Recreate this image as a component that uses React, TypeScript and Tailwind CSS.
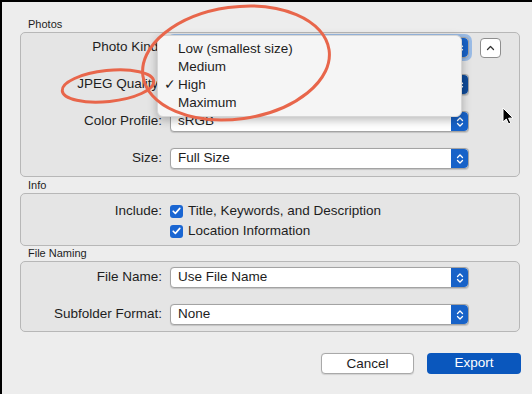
import React from "react";

function Stepper({ dark }: { dark?: boolean }) {
  return (
    <div
      className={`w-[17px] h-full flex items-center justify-center rounded-r-[4px] ${
        dark ? "bg-[#0e4a98]" : "bg-[#1762c8]"
      }`}
    >
      <svg width="8" height="12" viewBox="0 0 8 12" fill="none">
        <path d="M1.5 4.5 L4 2 L6.5 4.5" stroke="white" strokeWidth="1.3" strokeLinecap="round" strokeLinejoin="round" />
        <path d="M1.5 7.5 L4 10 L6.5 7.5" stroke="white" strokeWidth="1.3" strokeLinecap="round" strokeLinejoin="round" />
      </svg>
    </div>
  );
}

// value is optional: the two popups under the open menu show no text
function Popup({ value, focus, dark }: { value?: string; focus?: boolean; dark?: boolean }) {
  return (
    <div
      className={`w-[299px] h-[21px] flex items-stretch bg-white border border-[#a3a3a3] rounded-[4px] shadow-[0_0.5px_1px_rgba(0,0,0,0.15)] ${
        focus ? "ring-[3px] ring-[#7aa9e6]/70" : ""
      }`}
    >
      <div className="flex-1 pl-[7px] flex items-center text-[13.5px] text-[#1d1d1d]">{value}</div>
      <Stepper dark={dark} />
    </div>
  );
}

function Row({ label, children }: { label: string; children: React.ReactNode }) {
  return (
    <div className="flex items-center h-[21px]">
      <div className="w-[141px] text-right text-[13.5px] text-[#1d1d1d] whitespace-nowrap">{label}</div>
      <div className="ml-[8px] flex items-center">{children}</div>
    </div>
  );
}

function Check({ label }: { label: string }) {
  return (
    <div className="flex items-center h-[18px]">
      <div className="w-[13px] h-[13px] rounded-[3px] bg-[#1a66d2] flex items-center justify-center">
        <svg width="9" height="8" viewBox="0 0 9 8" fill="none">
          <path d="M1.2 4.2 L3.4 6.4 L7.8 1.4" stroke="white" strokeWidth="1.6" strokeLinecap="round" strokeLinejoin="round" />
        </svg>
      </div>
      <span className="ml-[5px] text-[13.5px] text-[#1d1d1d]">{label}</span>
    </div>
  );
}

function SectionLabel({ text, className = "" }: { text: string; className?: string }) {
  return <div className={`h-[15px] leading-[15px] pl-[8px] text-[11px] text-[#1d1d1d] ${className}`}>{text}</div>;
}

export default function App() {
  const items = ["Low (smallest size)", "Medium", "High", "Maximum"];

  return (
    <div className="relative w-[532px] h-[394px] overflow-hidden bg-[#ededed] border-t-2 border-l-2 border-black font-['Liberation_Sans',Arial,sans-serif]">
      <div className="pl-[18px] pt-[15px] w-[518px]">
        <SectionLabel text="Photos" />
        <div className="w-[500px] border border-[#b7b7b7] rounded-[5px] bg-[#e5e5e5] pt-[4px] pb-[7px] flex flex-col gap-[16px]">
          <Row label="Photo Kind:">
            <Popup focus />
            <div className="ml-[11px] w-[21px] h-[20px] bg-white border border-[#8e8e8e] rounded-[4px] flex items-center justify-center">
              <svg width="9" height="6" viewBox="0 0 9 6" fill="none">
                <path d="M1.5 4.5 L4.5 1.5 L7.5 4.5" stroke="#333" strokeWidth="1.3" strokeLinecap="round" strokeLinejoin="round" />
              </svg>
            </div>
          </Row>
          <Row label="JPEG Quality:">
            <Popup dark />
          </Row>
          <Row label="Color Profile:">
            <Popup value="sRGB" />
          </Row>
          <Row label="Size:">
            <Popup value="Full Size" />
          </Row>
        </div>

        <SectionLabel text="Info" className="mt-[1px]" />
        <div className="w-[500px] h-[53px] border border-[#b7b7b7] rounded-[5px] bg-[#e5e5e5] pt-[7px] flex flex-col gap-[1px]">
          <div className="flex items-center">
            <div className="w-[141px] text-right text-[13.5px] text-[#1d1d1d]">Include:</div>
            <div className="ml-[8px]">
              <Check label="Title, Keywords, and Description" />
            </div>
          </div>
          <div className="ml-[149px]">
            <Check label="Location Information" />
          </div>
        </div>

        <SectionLabel text="File Naming" />
        <div className="w-[500px] border border-[#b7b7b7] rounded-[5px] bg-[#e5e5e5] pt-[5px] pb-[6px] flex flex-col gap-[16px]">
          <Row label="File Name:">
            <Popup value="Use File Name" />
          </Row>
          <Row label="Subfolder Format:">
            <Popup value="None" />
          </Row>
        </div>

        <div className="mt-[21px] w-[501px] flex justify-end gap-[13px]">
          <button className="w-[93px] h-[21px] bg-white border border-[#a9a9a9] rounded-[4px] text-[13.5px] text-[#1d1d1d] shadow-[0_0.5px_1px_rgba(0,0,0,0.12)]">
            Cancel
          </button>
          <button className="w-[94px] h-[21px] bg-[#0a57bd] rounded-[4px] text-[13.5px] text-white">Export</button>
        </div>
      </div>

      {/* open JPEG Quality menu */}
      <div className="absolute left-[155px] top-[33px] w-[305px] h-[82px] bg-[#f5f5f5] rounded-[6px] border border-[#d6d6d6] shadow-[0_3px_10px_rgba(0,0,0,0.28)] pt-[4px]">
        {items.map((it) => (
          <div key={it} className="relative h-[18px] leading-[18px] pl-[20px] text-[13.5px] text-[#1d1d1d]">
            {it === "High" && <span className="absolute left-[6px] top-0">✓</span>}
            {it}
          </div>
        ))}
      </div>

      {/* annotation ellipses */}
      <svg className="absolute left-[-2px] top-[-2px] pointer-events-none" width="532" height="394" viewBox="0 0 532 394">
        <ellipse cx="236" cy="63" rx="94" ry="56" transform="rotate(-8 236 63)" fill="none" stroke="#e8664b" strokeWidth="3" />
        <ellipse cx="108" cy="86" rx="46" ry="15.5" transform="rotate(-6 108 86)" fill="none" stroke="#e8664b" strokeWidth="3" />
        {/* mouse cursor */}
        <path
          d="M503 108 L503 122 L506.3 119 L508.6 124 L510.8 123 L508.6 118.2 L513 118 Z"
          fill="black"
          stroke="white"
          strokeWidth="1"
          strokeLinejoin="round"
        />
      </svg>
    </div>
  );
}
